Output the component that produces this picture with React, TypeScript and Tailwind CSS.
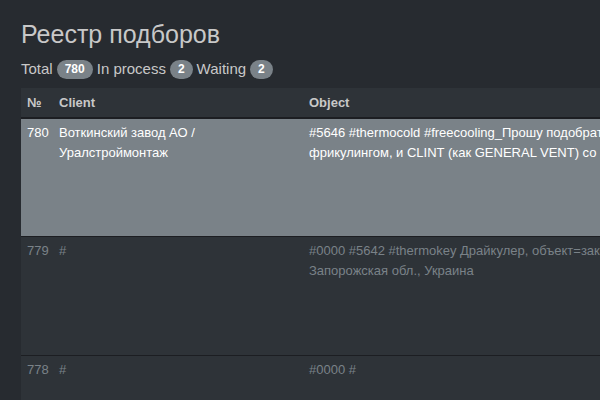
const rows = [
    {
        id: 780,
        client: ['Воткинский завод АО /', 'Уралстроймонтаж'],
        object: [
            '#5646 #thermocold #freecooling_Прошу подобрать чиллер с естественным охлаждением',
            'фрикулингом, и CLINT (как GENERAL VENT) со встроенным фрикулингом',
        ],
        active: true,
    },
    {
        id: 779,
        client: ['#'],
        object: ['#0000 #5642 #thermokey Драйкулер, объект=заказчик, г. Запорожье,', 'Запорожская обл., Украина'],
        active: false,
    },
    {
        id: 778,
        client: ['#'],
        object: ['#0000 #'],
        active: false,
    },
];

function Badge({ children }: { children: React.ReactNode }) {
    return (
        <span className="inline-flex h-[19px] min-w-[20px] items-center justify-center rounded-full bg-[#7a8288] px-[8px] text-[12px] font-bold text-white">
            {children}
        </span>
    );
}

export default function App() {
    return (
        <div className="h-[400px] w-[600px] overflow-hidden bg-[#272b30] pl-[21px] font-['Liberation_Sans',Arial,sans-serif] text-[#c8c8c8]">
            <h1 className="pt-[17px] text-[25px] leading-[34px] font-normal">Реестр подборов</h1>
            <div className="mt-[8px] flex items-center gap-[4px] text-[15px] leading-[20px]">
                <span>Total</span>
                <Badge>780</Badge>
                <span>In process</span>
                <Badge>2</Badge>
                <span>Waiting</span>
                <Badge>2</Badge>
            </div>
            <table className="mt-[9px] w-[900px] table-fixed border-collapse bg-[#2e3338] text-[13px]">
                <colgroup>
                    <col className="w-[32px]" />
                    <col className="w-[250px]" />
                    <col />
                </colgroup>
                <thead>
                    <tr className="h-[30px] border-b-2 border-[#1c1e22]">
                        <th className="px-[6px] text-left font-bold">№</th>
                        <th className="px-[6px] text-left font-bold">Client</th>
                        <th className="px-[6px] text-left font-bold">Object</th>
                    </tr>
                </thead>
                <tbody>
                    {rows.map((row) => (
                        <tr
                            key={row.id}
                            className={
                                row.active
                                    ? 'h-[118px] border-b border-[#1c1e22] bg-[#7a8288] align-top text-white'
                                    : 'h-[119px] border-b border-[#1c1e22] align-top text-[#7a8288]'
                            }
                        >
                            <td className="px-[6px] py-[4px] leading-[20px]">{row.id}</td>
                            <td className="px-[6px] py-[4px] leading-[20px]">
                                {row.client.map((line) => (
                                    <div key={line} className="whitespace-nowrap">{line}</div>
                                ))}
                            </td>
                            <td className="px-[6px] py-[4px] leading-[20px]">
                                {row.object.map((line) => (
                                    <div key={line} className="whitespace-nowrap">{line}</div>
                                ))}
                            </td>
                        </tr>
                    ))}
                </tbody>
            </table>
        </div>
    );
}
